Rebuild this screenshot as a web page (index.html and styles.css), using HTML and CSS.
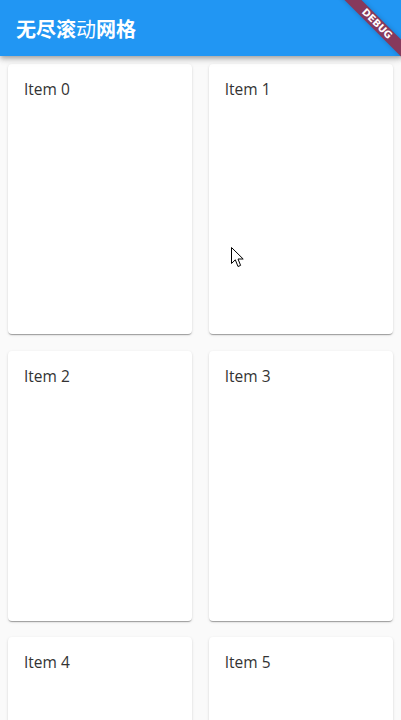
FILE: index.html
```html
<!DOCTYPE html>
<html lang="zh">
<head>
<meta charset="utf-8">
<title>无尽滚动网格</title>
<link rel="stylesheet" href="styles.css">
</head>
<body>
<div class="app">
  <header class="appbar">
    <h1 class="title">无尽滚<span class="thin">动</span>网格</h1>
  </header>
  <main class="grid">
    <div class="card"><span class="label">Item 0</span></div>
    <div class="card"><span class="label">Item 1</span></div>
    <div class="card"><span class="label">Item 2</span></div>
    <div class="card"><span class="label">Item 3</span></div>
    <div class="card"><span class="label">Item 4</span></div>
    <div class="card"><span class="label">Item 5</span></div>
  </main>
  <div class="banner"><span class="banner-text">DEBUG</span></div>
  <svg class="cursor" width="13" height="21" viewBox="0 0 13 21">
    <path d="M0.5 0.5 L0.5 16.5 L4.3 12.8 L7 19.5 L9.6 18.4 L7 12 L12.2 12 Z" fill="#fff" stroke="#000" stroke-width="1" stroke-linejoin="miter"/>
  </svg>
</div>
</body>
</html>
```
FILE: styles.css
```css
html, body {
  margin: 0;
  padding: 0;
  height: 100%;
  overflow: hidden;
  background: #fafafa;
}
.app {
  position: relative;
  width: 401px;
  height: 720px;
  overflow: hidden;
  background: #fafafa;
  font-family: "Open Sans", "Noto Sans", "Noto Sans CJK SC", sans-serif;
}
.appbar {
  position: relative;
  z-index: 2;
  height: 56px;
  background: #2196f3;
  display: flex;
  align-items: center;
  padding: 0 16px;
  box-shadow: 0 2px 4px -1px rgba(0,0,0,0.2), 0 4px 5px 0 rgba(0,0,0,0.14), 0 1px 10px 0 rgba(0,0,0,0.12);
}
.title {
  margin: 0;
  color: #fff;
  font-family: "Noto Sans CJK SC", sans-serif;
  font-size: 20px;
  font-weight: 700;
  line-height: 1;
  padding-top: 1px;
}
.thin {
  font-weight: 400;
}
.grid {
  display: grid;
  grid-template-columns: 1fr 1fr;
  grid-auto-rows: 270px;
  column-gap: 16.5px;
  row-gap: 16.5px;
  padding: 8px;
}
.card {
  background: #fff;
  border-radius: 4px;
  box-shadow: 0 2px 1px -1px rgba(0,0,0,0.2), 0 1px 1px 0 rgba(0,0,0,0.14), 0 1px 3px 0 rgba(0,0,0,0.12);
  padding: 14px 16px 16px;
}
.label {
  font-size: 15.5px;
  line-height: 20px;
  color: #333;
}
.banner {
  position: absolute;
  z-index: 3;
  left: 319px;
  top: 20px;
  width: 120px;
  height: 12px;
  transform: rotate(45deg);
  background: #87395c;
  box-shadow: 0 0 5px rgba(0,0,0,0.2);
  color: #fff;
  font-family: "DejaVu Sans", sans-serif;
  font-size: 9.8px;
  font-weight: 900;
  line-height: 12px;
  text-align: center;
}
.banner-text {
  display: block;
  position: relative;
  top: 0;
  left: -3px;
}
.cursor {
  position: absolute;
  z-index: 4;
  left: 231px;
  top: 247px;
}
```
